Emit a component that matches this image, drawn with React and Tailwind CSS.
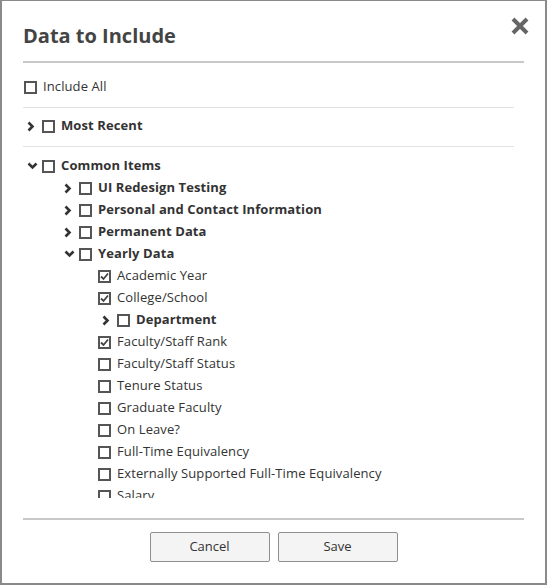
import React from 'react';

const font = { fontFamily: '"Open Sans", "Noto Sans", sans-serif' };

function Box({ checked }) {
  return (
    <span className="flex h-[13px] w-[13px] shrink-0 items-center justify-center border-2 border-[#555] bg-white">
      {checked && (
        <svg width="9" height="9" viewBox="0 0 9 9">
          <path d="M1 4.5 L3.5 7 L8 1.5" fill="none" stroke="#444" strokeWidth="1.8" />
        </svg>
      )}
    </span>
  );
}

function Chevron({ open }) {
  return (
    <span className="flex w-[17px] shrink-0 items-center pl-[2px]">
      {open ? (
        <svg width="11" height="8" viewBox="0 0 11 8">
          <path d="M1.5 1.5 L5.5 5.5 L9.5 1.5" fill="none" stroke="#333" strokeWidth="2.6" />
        </svg>
      ) : (
        <svg width="8" height="11" viewBox="0 0 8 11">
          <path d="M1.5 1.5 L5.5 5.5 L1.5 9.5" fill="none" stroke="#333" strokeWidth="2.6" />
        </svg>
      )}
    </span>
  );
}

// one row of the tree; indent is the left padding of the row
function Row({ indent, label, group, open, checked }) {
  return (
    <div className="flex h-[22px] items-center" style={{ paddingLeft: indent }}>
      {group && <Chevron open={open} />}
      <Box checked={checked} />
      <span className={`ml-[6px] whitespace-nowrap text-[13px] tracking-[0.1px] text-[#333] ${group ? 'font-bold' : ''}`}>
        {label}
      </span>
    </div>
  );
}

const yearly = [
  { label: 'Academic Year', checked: true },
  { label: 'College/School', checked: true },
  { label: 'Department', group: true },
  { label: 'Faculty/Staff Rank', checked: true },
  { label: 'Faculty/Staff Status' },
  { label: 'Tenure Status' },
  { label: 'Graduate Faculty' },
  { label: 'On Leave?' },
  { label: 'Full-Time Equivalency' },
  { label: 'Externally Supported Full-Time Equivalency' },
  { label: 'Salary' },
];

export default function App() {
  return (
    <div className="relative h-[585px] w-[547px] overflow-hidden border-2 border-t border-[#8a8a8a] bg-white" style={font}>
      <button className="absolute left-[509px] top-[16px]" aria-label="Close">
        <svg width="18" height="18" viewBox="0 0 18 18">
          <path d="M2 2 L16 16 M16 2 L2 16" stroke="#666" strokeWidth="4" />
        </svg>
      </button>

      <div className="ml-[21px] w-[501px]">
        <h2 className="pt-[21px] pb-[11px] text-[20px] font-bold leading-[28px] text-[#444]">Data to Include</h2>
        <div className="h-[2px] bg-[#c8c8c8]" />

        <div className="h-[435px] w-[491px] overflow-hidden">
          <div className="border-b border-[#e2e2e2] pt-[13px] pb-[9px]">
            <Row indent={1} label="Include All" />
          </div>
          <div className="border-b border-[#e2e2e2] pt-[7px] pb-[9px]">
            <Row indent={2} label="Most Recent" group />
          </div>
          <div className="pt-[8px]">
            <Row indent={2} label="Common Items" group open />
            <Row indent={39} label="UI Redesign Testing" group />
            <Row indent={39} label="Personal and Contact Information" group />
            <Row indent={39} label="Permanent Data" group />
            <Row indent={39} label="Yearly Data" group open />
            {yearly.map((it) => (
              <Row key={it.label} indent={it.group ? 77 : 75} {...it} />
            ))}
          </div>
        </div>

        <div className="mt-[20px] h-[2px] bg-[#c8c8c8]" />
        <div className="flex justify-center gap-[8px] pt-[12px]">
          <button className="h-[30px] w-[120px] rounded-[2px] border border-[#8f8f8f] bg-[#f4f4f4] text-[13px] text-[#333]">
            Cancel
          </button>
          <button className="h-[30px] w-[120px] rounded-[2px] border border-[#8f8f8f] bg-[#f4f4f4] text-[13px] text-[#333]">
            Save
          </button>
        </div>
      </div>
    </div>
  );
}
